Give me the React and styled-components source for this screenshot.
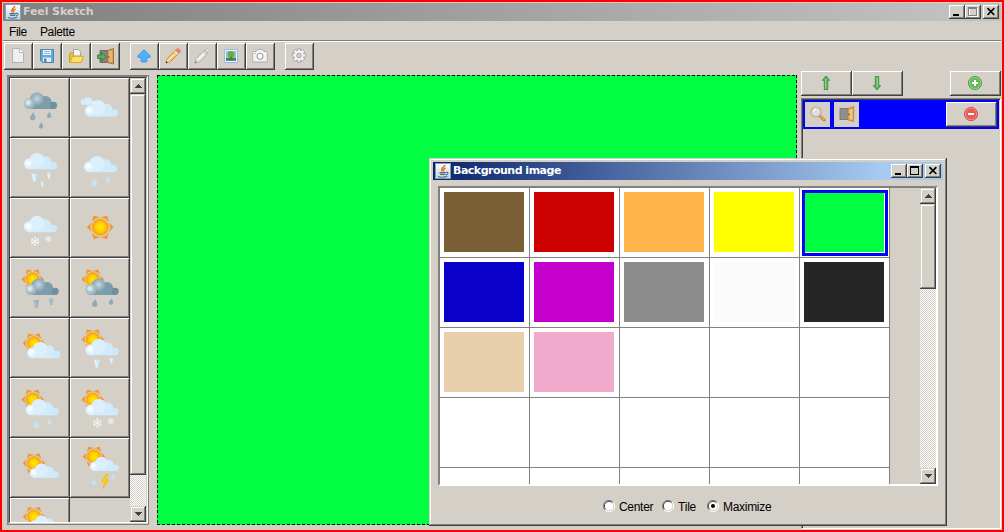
import React from 'react';
import styled, { createGlobalStyle, css } from 'styled-components';

const FACE = '#d4d0c8';
const SHADOW = '#808080';
const DARK = '#404040';

const GlobalStyle = createGlobalStyle`
  html, body { margin: 0; padding: 0; overflow: hidden; }
  *, *::before, *::after { box-sizing: border-box; }
  body { font: 12px/14px "Liberation Sans", Arial, sans-serif; color: #000; }
  svg { display: block; flex: none; }
`;

const raised = css`
  background: ${FACE};
  box-shadow: inset -1px -1px ${DARK}, inset 1px 1px #fff, inset -2px -2px ${SHADOW};
`;

const AppWindow = styled.div`
  position: relative;
  width: 1004px;
  height: 532px;
  padding: 1px;
  border: 2px solid #f00;
  background: ${FACE};
  overflow: hidden;
`;

const TitleBar = styled.header`
  display: flex;
  align-items: center;
  height: 18px;
  padding: 0 2px;
  color: ${(p) => (p.$active ? '#fff' : FACE)};
  background: ${(p) =>
    p.$active
      ? 'linear-gradient(90deg, #0a246a, #a6caf0 88%)'
      : 'linear-gradient(90deg, #808080, #c0c0c0 94%)'};
`;

const Title = styled.h1`
  flex: 1;
  margin: 0 0 0 2px;
  font-family: "DejaVu Sans", Verdana, sans-serif;
  font-size: 11px;
  line-height: 18px;
  font-weight: bold;
  letter-spacing: ${(p) => p.$spacing};
  white-space: nowrap;
`;

const CaptionButton = styled.button`
  display: block;
  width: 16px;
  height: 14px;
  padding: 0;
  border: 0;
  margin-left: ${(p) => (p.$apart ? '2px' : '0')};
  ${raised}
`;

const MenuBar = styled.nav`
  display: flex;
  gap: 13px;
  height: 21px;
  padding: 4px 6px 0;
  border-bottom: 1px solid #fff;
  box-shadow: inset 0 -1px ${SHADOW};
  letter-spacing: -0.35px;
`;

const ToolBar = styled.div`
  display: flex;
  gap: 10px;
  height: 28px;
  padding: 1px 1px 0;
`;

const ToolGroup = styled.div`
  display: flex;
`;

const PushButton = styled.button`
  display: flex;
  align-items: center;
  justify-content: center;
  width: ${(p) => p.$w}px;
  height: ${(p) => p.$h}px;
  padding: 0 1px 1px 0;
  border: 0;
  ${raised}
`;

const Workspace = styled.main`
  display: flex;
  padding-left: 4px;
`;

const PaletteFrame = styled.section`
  width: 142px;
  height: 450px;
  margin: 5px 8px 0 0;
  border: 1px solid ${SHADOW};
`;

const PaletteBevel = styled.div`
  height: 448px;
  border: 1px solid;
  border-color: ${SHADOW} #fff ${FACE} ${SHADOW};
`;

const PaletteView = styled.div`
  display: flex;
  height: 446px;
  border: 1px solid;
  border-color: ${DARK} ${FACE} #fff ${DARK};
  overflow: hidden;
`;

const WeatherGrid = styled.div`
  display: grid;
  grid-template-columns: 60px 60px;
  grid-auto-rows: 60px;
  height: 444px;
  overflow: hidden;
`;

const WeatherButton = styled.button`
  padding: 0;
  border: 0;
  ${raised}
`;

const ScrollTrack = styled.div`
  display: flex;
  flex-direction: column;
  width: 16px;
  height: 100%;
  background: repeating-conic-gradient(#fff 0 25%, ${FACE} 0 50%) 0 0 / 2px 2px;
`;

const ScrollPiece = styled.div`
  display: flex;
  align-items: center;
  justify-content: center;
  height: ${(p) => p.$h}px;
  margin-top: ${(p) => (p.$end ? 'auto' : '0')};
  background: ${FACE};
  box-shadow: inset -1px -1px ${DARK}, inset 1px 1px ${FACE}, inset -2px -2px ${SHADOW},
    inset 2px 2px #fff;
`;

const Canvas = styled.section`
  width: 640px;
  height: 450px;
  margin: 5px 4px 0 0;
  --h: repeating-linear-gradient(90deg, #000 0 3px, transparent 3px 5px);
  --v: repeating-linear-gradient(180deg, #000 0 3px, transparent 3px 5px);
  background: var(--h) 0 0 / 100% 1px no-repeat, var(--h) 0 100% / 100% 1px no-repeat,
    var(--v) 0 0 / 1px 100% no-repeat, var(--v) 100% 0 / 1px 100% no-repeat, #00ff40;
`;

const LayerPanel = styled.aside`
  width: 200px;
  padding-top: 1px;
`;

const LayerActions = styled.div`
  display: flex;
  margin-bottom: 2px;
  & > :last-child { margin-left: auto; }
`;

const LayerList = styled.div`
  height: 431px;
  border: 1px solid;
  border-color: ${SHADOW} #fff #fff ${SHADOW};
  box-shadow: inset 1px 1px ${DARK};
  padding: 1px;
`;

const LayerRow = styled.div`
  display: flex;
  gap: 4px;
  height: 29px;
  width: 196px;
  padding: 2px;
  background: #00f;
  & > :last-child { margin-left: auto; }
`;

const LayerTile = styled.div`
  display: flex;
  align-items: center;
  justify-content: center;
  width: 25px;
  height: 25px;
  padding-bottom: 1px;
  background: ${FACE};
`;

const Dialog = styled.section`
  position: absolute;
  left: 427px;
  top: 156px;
  width: 518px;
  height: 368px;
  padding: 4px;
  background: ${FACE};
  box-shadow: inset -1px -1px ${DARK}, inset 1px 1px ${FACE}, inset -2px -2px ${SHADOW},
    inset 2px 2px #fff;
`;

const SwatchPane = styled.div`
  display: flex;
  justify-content: space-between;
  width: 500px;
  height: 300px;
  margin: 6px 0 0 5px;
  border: 2px solid #fff;
  border-top-color: ${SHADOW};
  border-left-color: ${SHADOW};
`;

const SwatchGrid = styled.div`
  display: grid;
  grid-template-columns: repeat(5, 90px);
  grid-auto-rows: 70px;
  height: 296px;
  overflow: hidden;
`;

const Cell = styled.div`
  position: relative;
  padding: 4px;
  background: #fff;
  border: solid ${SHADOW};
  border-width: 0 1px 1px 0;
  &::after {
    content: '';
    display: ${(p) => (p.$selected ? 'block' : 'none')};
    position: absolute;
    inset: 2px 1px 1px 2px;
    border: 3px solid #00f;
  }
`;

const Swatch = styled.div`
  width: 80px;
  height: 60px;
  background: ${(p) => p.$color};
`;

const FitOptions = styled.div`
  display: flex;
  height: 14px;
  margin: 13px 0 0 170px;
`;

const Option = styled.label`
  display: flex;
  align-items: center;
  gap: 4px;
  width: ${(p) => p.$w}px;
  white-space: nowrap;
`;

const OptionText = styled.span`
  padding-top: 2px;
  letter-spacing: ${(p) => p.$spacing};
`;

/* ---------- window icons ---------- */

const JavaIcon = () => (
  <svg width="16" height="16" viewBox="0 0 16 16">
    <defs>
      <linearGradient id="jv" x1="0" y1="0" x2="0" y2="1">
        <stop offset="0" stopColor="#fff" />
        <stop offset="1" stopColor="#c3d2da" />
      </linearGradient>
    </defs>
    <rect x="0.5" y="0.5" width="15" height="15" fill="url(#jv)" stroke="#7fa0b8" />
    <path d="M10 2C9.4 4.2 5.2 5 7.2 8.4M10.6 5C8 6 8 6.8 9 8.4" fill="none" stroke="#ec7420" strokeWidth="1.5" />
    <path d="M4.4 9.6h6.4M5 11.4h5.4M3 13.5c3 1 7 .8 9.4-.4M11 9.4c2.8-.6 2.4 2 0 2.4" fill="none" stroke="#47728f" strokeWidth="1.1" />
  </svg>
);

const Minimize = () => (
  <svg width="16" height="14" shapeRendering="crispEdges"><rect x="4" y="9" width="6" height="2" /></svg>
);
const Maximize = ({ off }) => (
  <svg width="16" height="14" shapeRendering="crispEdges" fill="none">
    {off && <path d="M4.5 3.5h8v8h-8z" stroke="#fff" />}
    <path d="M3.5 2.5h8v8h-8zM3.5 3.5h8" stroke={off ? SHADOW : '#000'} />
  </svg>
);
const Close = () => (
  <svg width="16" height="14">
    <path d="M4.5 3.2l6.8 6.8M11.3 3.2L4.5 10" stroke="#000" strokeWidth="1.7" />
  </svg>
);

const CaptionButtons = ({ off }) => (
  <>
    <CaptionButton aria-label="minimize"><Minimize /></CaptionButton>
    <CaptionButton aria-label="maximize"><Maximize off={off} /></CaptionButton>
    <CaptionButton aria-label="close" $apart><Close /></CaptionButton>
  </>
);

const Arrow = ({ down }) => (
  <svg width="7" height="4" shapeRendering="crispEdges">
    <path d={down ? 'M0 0h7v1H6v1H5v1H4v1H3V3H2V2H1V1H0z' : 'M3 0h1v1h1v1h1v1h1v1H0V3h1V2h1V1h1z'} fill={DARK} />
  </svg>
);

const ScrollBar = ({ thumb }) => (
  <ScrollTrack>
    <ScrollPiece $h={16}><Arrow /></ScrollPiece>
    <ScrollPiece $h={thumb} />
    <ScrollPiece $h={16} $end><Arrow down /></ScrollPiece>
  </ScrollTrack>
);

/* ---------- tool icons, 16px grid ---------- */

const Icon = ({ children, size = 16 }) => (
  <svg width={size} height={size} viewBox="0 0 16 16">{children}</svg>
);

const NewIcon = () => (
  <Icon>
    <path d="M2.5 .5h7.2l3.8 3.8v10.2h-11z" fill="#efefef" stroke="#b2b2b2" />
    <path d="M9.5 .5v4h4" fill="#fff" stroke="#b8b8b8" />
  </Icon>
);
const SaveIcon = () => (
  <Icon>
    <path d="M1.5 1.5h13v13h-11l-2-2z" fill="#69a9d6" stroke="#4486b4" />
    <path d="M4 2h8v5H4z" fill="#eef6fb" />
    <path d="M5 3.5h6M5 5.5h6" stroke="#8fb9d6" />
    <path d="M4 9.5h8V14H4z" fill="#e6edf2" />
    <path d="M5 10.5h2.4V14H5z" fill="#4a87b3" />
  </Icon>
);
const OpenIcon = () => (
  <Icon>
    <path d="M1.5 14V5.5l1-1h3l1.5 2h6V14z" fill="#e6bd35" stroke="#cba126" />
    <path d="M5.5 8V1.5h4.8l2.2 2.2V8z" fill="#f7f7f7" stroke="#a5a5a5" />
    <path d="M2 14.5l2.6-6.2h10.9L13 14.5z" fill="#fbe06a" stroke="#d9ab22" />
  </Icon>
);
const ExitIcon = () => (
  <svg width="17" height="17" viewBox="0 0 17 17">
    <path d="M3 2.5h8v12H3z" fill="#858585" stroke="#6c6c6c" />
    <path d="M10.5 2.5l6-2v15.5l-6-1.5z" fill="#d9a05a" stroke="#a86f30" />
    <path d="M12 3.6l3-.9v11.5l-3-.8z" fill="#e6b878" />
    <circle cx="11.9" cy="9" r=".8" fill="#7a4c14" />
    <path d="M.5 7h4V4.3L9 8.7 4.5 13v-2.7h-4z" fill="#57b357" stroke="#2f8236" strokeWidth=".9" />
  </svg>
);
const UpIcon = () => (
  <Icon>
    <path d="M8 1.8L14.2 7.8q.3 1.5-1 1.6H10.8v4.3q-2.8 .9-5.6 0V9.4H2.8q-1.3-.1-1-1.6z" fill="#4fb0fc" stroke="#3896e8" strokeLinejoin="round" />
  </Icon>
);
const PencilIcon = ({ gray }) => (
  <Icon>
    <path d="M1 15l1.2-4.3L10.8 2l3.2 3.2-8.7 8.6z" fill={gray ? '#e6e6e6' : '#f8c469'} stroke={gray ? '#a2a2a2' : '#b57a2c'} strokeWidth=".8" />
    <path d="M1.4 14.6l1.1-3.9 2.8 2.9z" fill={gray ? '#ddd' : '#f5dfb9'} />
    <path d="M.8 15.2l.6-2.2 1.6 1.6z" fill={gray ? '#777' : '#333'} />
    <path d="M11.2 1.7l3.1 3.1 .9-.9c.7-1.4-1.7-3.7-3.1-3.1z" fill={gray ? '#eee' : '#f68682'} stroke={gray ? '#b0b0b0' : '#e06a66'} strokeWidth=".8" />
    <path d="M9.6 3.2l3.2 3.2" stroke={gray ? '#c4c4c4' : '#e9e4dc'} strokeWidth="1.3" />
    <path d="M4 11.5l5.6-5.6" stroke={gray ? '#f8f8f8' : '#ffe9ae'} strokeWidth="1.2" />
  </Icon>
);
const PictureIcon = () => (
  <Icon>
    <path d="M1.5 1.5h13v13h-13z" fill="#eef4fc" stroke="#9db9da" />
    <path d="M3 3h10v10H3z" fill="#8fc1ee" />
    <path d="M3 10h10v3H3z" fill="#4f7f4a" />
    <path d="M3 12h10v1H3z" fill="#5b8fc0" />
    <circle cx="8" cy="6.4" r="3.5" fill="#6fae35" />
    <path d="M8 8.5v3" stroke="#7a5a28" strokeWidth="1.2" />
  </Icon>
);
const CameraIcon = () => (
  <Icon>
    <path d="M.7 4.4c0-.8.5-1 1-1h2.6l1.5-2h4.4l1.5 2h2.6c.6 0 1 .4 1 1v8.6c0 .7-.4 1-1 1H1.7c-.6 0-1-.4-1-1z" fill="#f5f5f5" stroke="#adadad" />
    <circle cx="8" cy="8.3" r="3" fill="#fff" stroke="#a9a9a9" strokeWidth="1.2" />
    <path d="M2.3 5.5h1.5" stroke="#a5a5a5" />
  </Icon>
);
const GearIcon = () => (
  <Icon>
    <g fill="#f3f3f3" stroke="#a6a6a6">
      <path strokeLinejoin="round" d="M6.4 2.9L6.7 .7h2.6l.3 2.2 1.9-1.4 2.2 2.2-1.3 1.8 2.3.4v3l-2.3.4 1.3 1.8-2.2 2.2-1.9-1.3-.3 2.3H6.7L6.4 12l-1.9 1.3-2.2-2.2 1.3-1.8-2.3-.4v-3l2.3-.4-1.3-1.8 2.2-2.2z" />
      <circle cx="8" cy="7.5" r="2.3" fill={FACE} />
    </g>
  </Icon>
);

const GreenArrow = ({ down }) => (
  <Icon>
    <g transform={down ? 'rotate(180 8 8)' : undefined}>
      <path d="M8 1l3.6 4.3H9.7V14.5H6.3V5.3H4.4z" fill="#63b45b" stroke="#3d9440" strokeLinejoin="round" />
      <path d="M7.7 4v9.8" stroke="#a5d69d" />
    </g>
  </Icon>
);
const RoundSign = ({ minus }) => (
  <Icon>
    <circle cx="8" cy="8" r="6.6" fill={minus ? '#ea5a54' : '#63b957'} stroke={minus ? '#cf4f4c' : '#4f9b4a'} />
    <circle cx="8" cy="8" r="5.7" fill="none" stroke={minus ? '#f39c97' : '#a6d89c'} strokeWidth=".8" />
    <path d={minus ? 'M5 8h6' : 'M4.9 8h6.2M8 4.9v6.2'} stroke="#fff" strokeWidth="2" />
  </Icon>
);
const LensIcon = () => (
  <Icon>
    <path d="M10.2 10.2l4 3.8" stroke="#b9792f" strokeWidth="2.8" strokeLinecap="round" />
    <path d="M10.3 10.2l4 3.8" stroke="#eec083" strokeWidth="1.1" />
    <circle cx="6" cy="6" r="5" fill="#d8e1e4" stroke="#cfa672" strokeWidth="1.2" />
    <path d="M3.5 6A2.7 2.7 0 016 3.4" fill="none" stroke="#fff" />
  </Icon>
);
const DoorIcon = () => (
  <Icon>
    <path d="M1 2.5h8v11H1z" fill="#8e8e8e" stroke="#7a7a7a" />
    <path d="M9 2.6l5.7-2v14.9L9 13.8z" fill="#d9a462" stroke="#bc8844" />
    <path d="M10.4 3.7l3-1v11l-3-.8z" fill="#edc890" />
    <circle cx="10.2" cy="8.4" r=".8" fill="#80571c" />
  </Icon>
);

/* ---------- weather drawings, 60px grid ---------- */

const WeatherDefs = () => (
  <svg width="0" height="0" style={{ position: 'absolute' }}>
    <defs>
      <radialGradient id="sunFill"><stop offset="0" stopColor="#ffe800" /><stop offset=".55" stopColor="#ffd000" /><stop offset="1" stopColor="#fb9b0c" /></radialGradient>
      <radialGradient id="lightBall" cx=".45" cy=".45"><stop offset="0" stopColor="#f6fbff" /><stop offset="1" stopColor="#d9eefb" /></radialGradient>
      <radialGradient id="darkBall" cx=".5" cy=".4"><stop offset="0" stopColor="#c3d6df" /><stop offset="1" stopColor="#7f9dac" /></radialGradient>
      <radialGradient id="darkPuff" cx=".4" cy=".4"><stop offset="0" stopColor="#d5e2e8" /><stop offset="1" stopColor="#9cb6c1" /></radialGradient>
    </defs>
  </svg>
);

const Cloud = ({ x = 0, y = 0, s = 1, dark }) => (
  <g transform={`translate(${x + 14} ${y + 14}) scale(${s})`}>
    <g fill={dark ? '#7d9dac' : '#d2ebfa'}>
      <path d="M5 10h25a3.7 3.7 0 010 7H5z" />
      <circle cx="21.5" cy="10" r="6" />
      <circle cx="29.5" cy="13.3" r="3.6" fill={dark ? '#6e909f' : '#cdeafa'} />
    </g>
    <circle cx="13" cy="8" r="7.4" fill={dark ? 'url(#darkBall)' : '#dbf0fc'} />
    <circle cx="5.3" cy="11.5" r="5.5" fill={dark ? 'url(#darkPuff)' : 'url(#lightBall)'} />
    <circle cx="4.4" cy="10.8" r="2.4" fill="#fff" opacity={dark ? 0.35 : 0.6} />
  </g>
);

const Sun = ({ x, y, r = 7.2 }) => (
  <g transform={`translate(${x} ${y}) scale(${r / 7.2})`}>
    {[0, 60, 120, 180, 240, 300].map((a) => (
      <path key={a} transform={`rotate(${a})`} d="M7.6 -3.4L11 0L7.6 3.4Q9.4 0 7.6 -3.4z" fill="#f7931e" stroke="#f7931e" strokeWidth=".4" />
    ))}
    <circle r="6.8" fill="url(#sunFill)" stroke="#f59a16" strokeWidth=".5" />
  </g>
);

const Drop = ({ x, y, s = 1, dark }) => (
  <path transform={`translate(${x} ${y}) scale(${s})`} d="M0.6 -4C1 -2 2.8 -.3 2.7 1.5A2.7 2.7 0 01-2.7 1.5C-2.7 0 -.2 -1.6 .6 -4z" fill={dark ? '#8fa9b5' : '#c4e4f5'} />
);

const Hail = ({ x, y, s = 1, dark }) => (
  <g transform={`translate(${x} ${y}) scale(${s})`}>
    <path d="M-2.8 -4H2.8L1.4 4H-1z" fill={dark ? '#9bb4bf' : '#cfeafa'} />
    <path d="M-1.4 -3.4L-.2 3" stroke={dark ? '#aec3cc' : '#f4fbff'} strokeWidth="1" />
  </g>
);

const Flake = ({ x, y, s = 1 }) => (
  <g transform={`translate(${x} ${y}) scale(${s})`} stroke="#f0f8fc" strokeWidth=".9" fill="none">
    {[0, 60, 120].map((a) => (
      <path key={a} transform={`rotate(${a})`} d="M0 -4.4V4.4M-1.3 -4L0 -2.8L1.3 -4M-1.3 4L0 2.8L1.3 4" />
    ))}
  </g>
);

const weather = [
  <><Cloud dark /><Drop dark x={22.7} y={38} /><Drop dark x={39} y={36.7} s={0.8} /><Drop dark x={31} y={47.3} s={0.8} /></>,
  <><g fill="#d5edfb"><circle cx="13.6" cy="24" r="3" /><circle cx="18" cy="23.5" r="4" /><circle cx="22.5" cy="25" r="2.4" /></g><Cloud x={0.9} y={7.5} /></>,
  <><Cloud y={0.3} /><Hail x={24.3} y={39.7} /><Hail x={39} y={37.7} s={0.75} /><Hail x={32.3} y={46.3} s={0.65} /></>,
  <><Cloud y={3.3} /><Drop x={24.3} y={44} /><Drop x={37.7} y={41.3} s={0.8} /></>,
  <><Cloud y={3.2} /><Flake x={25} y={43.3} /><Flake x={38.3} y={41} s={0.7} /></>,
  <Sun x={30.3} y={29.3} r={8.6} />,
  <><Sun x={22.7} y={21.3} /><Cloud dark x={1.6} y={6} /><Hail dark x={26.3} y={46} /><Hail dark x={41} y={43.7} s={0.8} /></>,
  <><Sun x={22.7} y={21.3} /><Cloud dark x={1.6} y={6} /><Drop dark x={24.7} y={44.7} /><Drop dark x={41} y={43.3} s={0.85} /></>,
  <><Sun x={24} y={25.3} /><Cloud x={3.2} y={9.3} /></>,
  <><Sun x={22.8} y={21.3} /><Cloud x={1.6} y={6.3} /><Hail x={26.7} y={45.7} /><Hail x={41.3} y={43} s={0.7} /></>,
  <><Sun x={22.7} y={21.5} /><Cloud x={1.7} y={6.3} /><Drop x={26.3} y={46} /><Drop x={39.3} y={43} s={0.8} /></>,
  <><Sun x={22.8} y={21.5} /><Cloud x={1.7} y={6.3} /><Flake x={27.3} y={45} /><Flake x={41} y={43.3} s={0.7} /></>,
  <><Sun x={24} y={25.3} /><Cloud x={6} y={11} s={0.87} /></>,
  <><Sun x={24} y={18.5} /><Cloud x={6} y={4.3} s={0.87} /><Drop x={24} y={43.7} s={0.75} /><Drop x={43} y={38.7} s={0.75} /><path d="M36 36L32 44.2h3L33 50.6 38.5 42h-3.2L38 36.5z" fill="#ffd800" stroke="#f0a800" strokeWidth=".6" /></>,
  <><Sun x={24} y={18.7} /><Cloud x={6} y={3} s={0.87} /></>,
];

const Radio = ({ on }) => (
  <svg width="12" height="12" viewBox="0 0 12 12">
    <circle cx="6" cy="6" r="5" fill="#fff" />
    <path d="M2 10A5.6 5.6 0 0110 2" fill="none" stroke={SHADOW} />
    <path d="M2.7 9.3A4.6 4.6 0 019.3 2.7" fill="none" stroke={DARK} />
    <path d="M10 2A5.6 5.6 0 012 10" fill="none" stroke="#fff" />
    <path d="M9.3 2.7A4.6 4.6 0 012.7 9.3" fill="none" stroke={FACE} />
    {on && <circle cx="6" cy="6" r="2" />}
  </svg>
);

const toolGroups = [
  [NewIcon, SaveIcon, OpenIcon, ExitIcon],
  [UpIcon, PencilIcon, () => <PencilIcon gray />, PictureIcon, CameraIcon],
  [GearIcon],
];

const swatches = [
  '#7b6035', '#cc0000', '#ffb54c', '#ffff00', '#00ff40',
  '#0a00cc', '#c600cc', '#8c8c8c', '#fafafa', '#262626',
  '#e8d0ac', '#f0aacc',
];
const cells = Array.from({ length: 25 }, (_, i) => swatches[i]);

export default function App() {
  return (
    <>
      <GlobalStyle />
      <AppWindow>
        <WeatherDefs />
        <TitleBar>
          <JavaIcon />
          <Title $spacing="-0.1px">Feel Sketch</Title>
          <CaptionButtons off />
        </TitleBar>
        <MenuBar><span>File</span><span>Palette</span></MenuBar>
        <ToolBar>
          {toolGroups.map((group, g) => (
            <ToolGroup key={g}>
              {group.map((Glyph, i) => (
                <PushButton key={i} $w={29} $h={27}><Glyph /></PushButton>
              ))}
            </ToolGroup>
          ))}
        </ToolBar>
        <Workspace>
          <PaletteFrame>
            <PaletteBevel>
              <PaletteView>
                <WeatherGrid>
                  {weather.map((drawing, i) => (
                    <WeatherButton key={i}>
                      <svg width="60" height="60" viewBox="0 0 60 60">{drawing}</svg>
                    </WeatherButton>
                  ))}
                </WeatherGrid>
                <ScrollBar thumb={381} />
              </PaletteView>
            </PaletteBevel>
          </PaletteFrame>
          <Canvas />
          <LayerPanel>
            <LayerActions>
              <PushButton $w={51} $h={25}><GreenArrow /></PushButton>
              <PushButton $w={51} $h={25}><GreenArrow down /></PushButton>
              <PushButton $w={51} $h={25}><RoundSign /></PushButton>
            </LayerActions>
            <LayerList>
              <LayerRow>
                <LayerTile><LensIcon /></LayerTile>
                <LayerTile><DoorIcon /></LayerTile>
                <PushButton $w={51} $h={25}><RoundSign minus /></PushButton>
              </LayerRow>
            </LayerList>
          </LayerPanel>
        </Workspace>
        <Dialog>
          <TitleBar $active>
            <JavaIcon />
            <Title $spacing="-0.5px">Background image</Title>
            <CaptionButtons />
          </TitleBar>
          <SwatchPane>
            <SwatchGrid>
              {cells.map((color, i) => (
                <Cell key={i} $selected={i === 4}>{color && <Swatch $color={color} />}</Cell>
              ))}
            </SwatchGrid>
            <ScrollBar thumb={85} />
          </SwatchPane>
          <FitOptions>
            <Option $w={59}><Radio /><OptionText $spacing="-0.3px">Center</OptionText></Option>
            <Option $w={45}><Radio /><OptionText $spacing="-0.2px">Tile</OptionText></Option>
            <Option $w={70}><Radio on /><OptionText $spacing="-0.3px">Maximize</OptionText></Option>
          </FitOptions>
        </Dialog>
      </AppWindow>
    </>
  );
}
